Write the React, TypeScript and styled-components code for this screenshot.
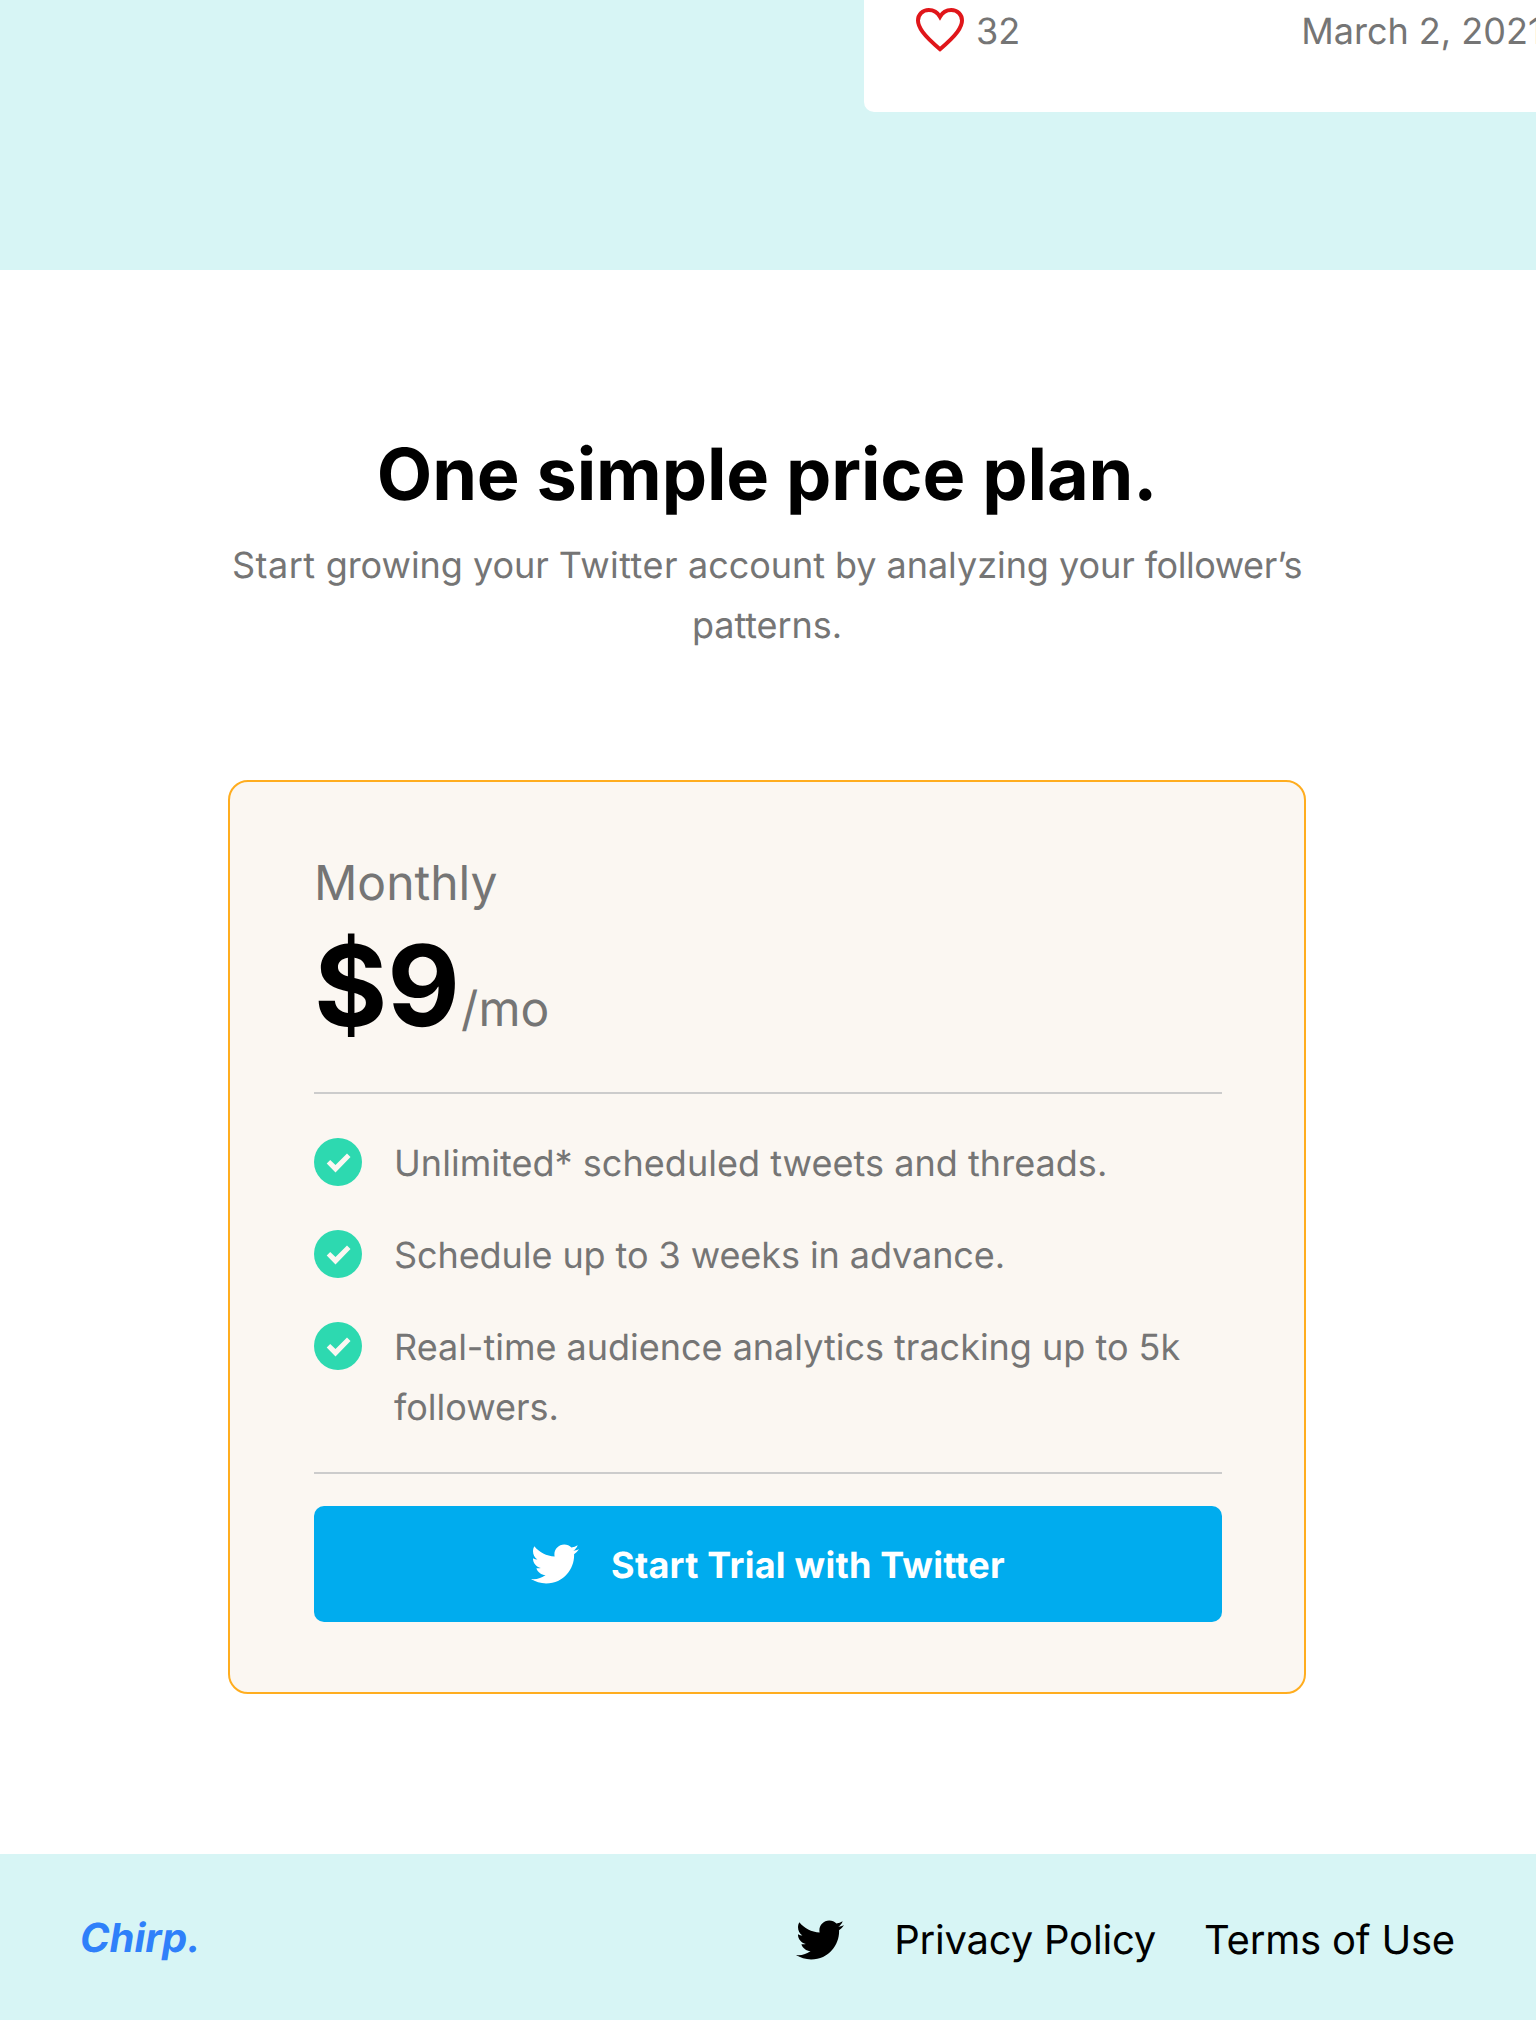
import React from 'react';
import styled, { createGlobalStyle } from 'styled-components';
import { FaTwitter } from 'react-icons/fa';

const colors = {
  mint: '#d7f5f5',
  grey: '#757575',
  sand: '#fbf7f2',
  amber: '#ffad1f',
  rule: '#cccccc',
  green: '#2dd9b0',
  sky: '#00acee',
  brand: '#2f80fa',
  heart: '#e0161a',
};

const GlobalStyle = createGlobalStyle`
  * {
    box-sizing: border-box;
  }
  body {
    margin: 0;
    background: #fff;
    color: #000;
    font-family: Inter, sans-serif;
    text-rendering: geometricPrecision;
    overflow-x: hidden;
  }
`;

const Page = styled.div`
  width: 100%;
  height: 2020px;
  display: flex;
  flex-direction: column;
  overflow: hidden;
`;

const Testimonials = styled.section`
  height: 270px;
  padding-left: 864px;
  background: ${colors.mint};
  overflow: hidden;
`;

const TweetCard = styled.article`
  width: 760px;
  height: 112px;
  padding: 1px 52px 0;
  display: flex;
  align-items: flex-start;
  background: #fff;
  border-radius: 0 0 10px 10px;
`;

const HeartIcon = styled.svg`
  width: 48px;
  height: 48px;
  margin-top: 5px;
  flex: none;
`;

const TweetMeta = styled.span<{ $indent: number }>`
  margin-left: ${(p) => p.$indent}px;
  font-size: 36px;
  line-height: 60px;
  color: ${colors.grey};
  white-space: nowrap;
`;

const Pricing = styled.section`
  height: 1584px;
  padding: 161px 230px 0 228px;
  display: flex;
  flex-direction: column;
`;

const Title = styled.h2`
  margin: 0;
  font-size: 72px;
  line-height: 88px;
  font-weight: 700;
  letter-spacing: -0.13px;
  text-align: center;
`;

const Subtitle = styled.p`
  margin: 16px 0 125px;
  font-size: 36px;
  line-height: 60px;
  letter-spacing: -0.05px;
  color: ${colors.grey};
  text-align: center;
`;

const Tracked = styled.span<{ $by: number }>`
  letter-spacing: ${(p) => p.$by}px;
`;

const Plan = styled.div`
  height: 914px;
  padding: 71px 82px 0 84px;
  display: flex;
  flex-direction: column;
  background: ${colors.sand};
  border: 2px solid ${colors.amber};
  border-radius: 20px;
`;

const Period = styled.div`
  font-size: 48px;
  line-height: 60px;
  color: ${colors.grey};
`;

const Price = styled.div`
  margin: 17px 0 50px;
  height: 112px;
  display: flex;
  align-items: baseline;
  font-size: 112px;
  line-height: 112px;
  font-weight: 700;
`;

const PerMonth = styled.span`
  margin-left: 1px;
  font-size: 48px;
  line-height: 60px;
  font-weight: 400;
  color: ${colors.grey};
`;

const Divider = styled.hr`
  width: 100%;
  height: 2px;
  margin: 0;
  border: 0;
  background: ${colors.rule};
`;

const Features = styled.ul`
  margin: 39px 0 35px;
  padding: 0;
  display: flex;
  flex-direction: column;
  gap: 32px;
  list-style: none;
`;

const Feature = styled.li`
  display: flex;
  align-items: flex-start;
  gap: 32px;
  font-size: 36px;
  line-height: 60px;
  color: ${colors.grey};
`;

const CheckIcon = styled.svg`
  width: 48px;
  height: 48px;
  margin-top: 5px;
  flex: none;
`;

const TrialButton = styled.button`
  height: 116px;
  margin: 32px 0 0;
  padding: 0;
  display: flex;
  align-items: center;
  justify-content: center;
  gap: 32px;
  border: 0;
  border-radius: 10px;
  background: ${colors.sky};
  color: #fff;
  font-family: inherit;
  font-size: 36px;
  font-weight: 700;
  line-height: 60px;
  letter-spacing: 0.23px;
  text-rendering: inherit;
`;

const TrialLabel = styled.span`
  padding-top: 2px;
`;

const Footer = styled.footer`
  height: 166px;
  padding: 56px 81px 0 80px;
  display: flex;
  align-items: flex-start;
  justify-content: space-between;
  background: ${colors.mint};
`;

const Brand = styled.span`
  margin-top: -2px;
  font-size: 40px;
  line-height: 60px;
  font-style: italic;
  font-weight: 700;
  color: ${colors.brand};
`;

const FooterNav = styled.nav`
  display: flex;
  align-items: center;
  gap: 48px;
  font-size: 40px;
  line-height: 60px;
  letter-spacing: -0.2px;
`;

const FooterBird = styled(FaTwitter)`
  width: 48px;
  height: 48px;
  margin-right: 2px;
`;

const FooterLink = styled.a`
  color: inherit;
  text-decoration: none;
`;

const Check = () => (
  <CheckIcon viewBox="0 0 48 48">
    <circle cx="24" cy="24" r="24" fill={colors.green} />
    <path d="M12.7 25.4 16.2 22l5.3 4.9L33 15.6l3.5 3.5-15 15.3z" fill={colors.sand} />
  </CheckIcon>
);

const features = [
  { text: 'Unlimited* scheduled tweets and threads.', tracking: 0.04 },
  { text: 'Schedule up to 3 weeks in advance.', tracking: -0.08 },
  { text: 'Real-time audience analytics tracking up to 5k followers.', tracking: -0.01 },
];

export default function App() {
  return (
    <Page>
      <GlobalStyle />
      <Testimonials>
        <TweetCard>
          <HeartIcon viewBox="0 0 48 48" fill="none" stroke={colors.heart} strokeWidth="4" strokeMiterlimit="10">
            <path d="M24 10.7C21.7 6.6 17.5 4 12.8 4 6.6 4 2 8.4 2 14.6c0 3.6 1.7 7.3 4.6 11.3C10.6 31.4 17 37.3 24 43.2c7-5.9 13.4-11.8 17.4-17.3 2.9-4 4.6-7.7 4.6-11.3C46 8.4 41.4 4 35.2 4 30.5 4 26.3 6.6 24 10.7z" />
          </HeartIcon>
          <TweetMeta $indent={12}>32</TweetMeta>
          <TweetMeta $indent={281}>March 2, 2021</TweetMeta>
        </TweetCard>
      </Testimonials>
      <Pricing>
        <Title>One simple price plan.</Title>
        <Subtitle>
          <Tracked $by={0.5}>Start</Tracked> growing your <Tracked $by={0.45}>Twitter</Tracked> account by
          analyzing your <Tracked $by={-0.45}>follower’s</Tracked> patterns.
        </Subtitle>
        <Plan>
          <Period>Monthly</Period>
          <Price>
            $9<PerMonth>/mo</PerMonth>
          </Price>
          <Divider />
          <Features>
            {features.map(({ text, tracking }) => (
              <Feature key={text}>
                <Check />
                <Tracked $by={tracking}>{text}</Tracked>
              </Feature>
            ))}
          </Features>
          <Divider />
          <TrialButton>
            <FaTwitter size={48} />
            <TrialLabel>Start Trial with Twitter</TrialLabel>
          </TrialButton>
        </Plan>
      </Pricing>
      <Footer>
        <Brand>Chirp.</Brand>
        <FooterNav>
          <FooterBird />
          <FooterLink>Privacy Policy</FooterLink>
          <FooterLink>Terms of Use</FooterLink>
        </FooterNav>
      </Footer>
    </Page>
  );
}
